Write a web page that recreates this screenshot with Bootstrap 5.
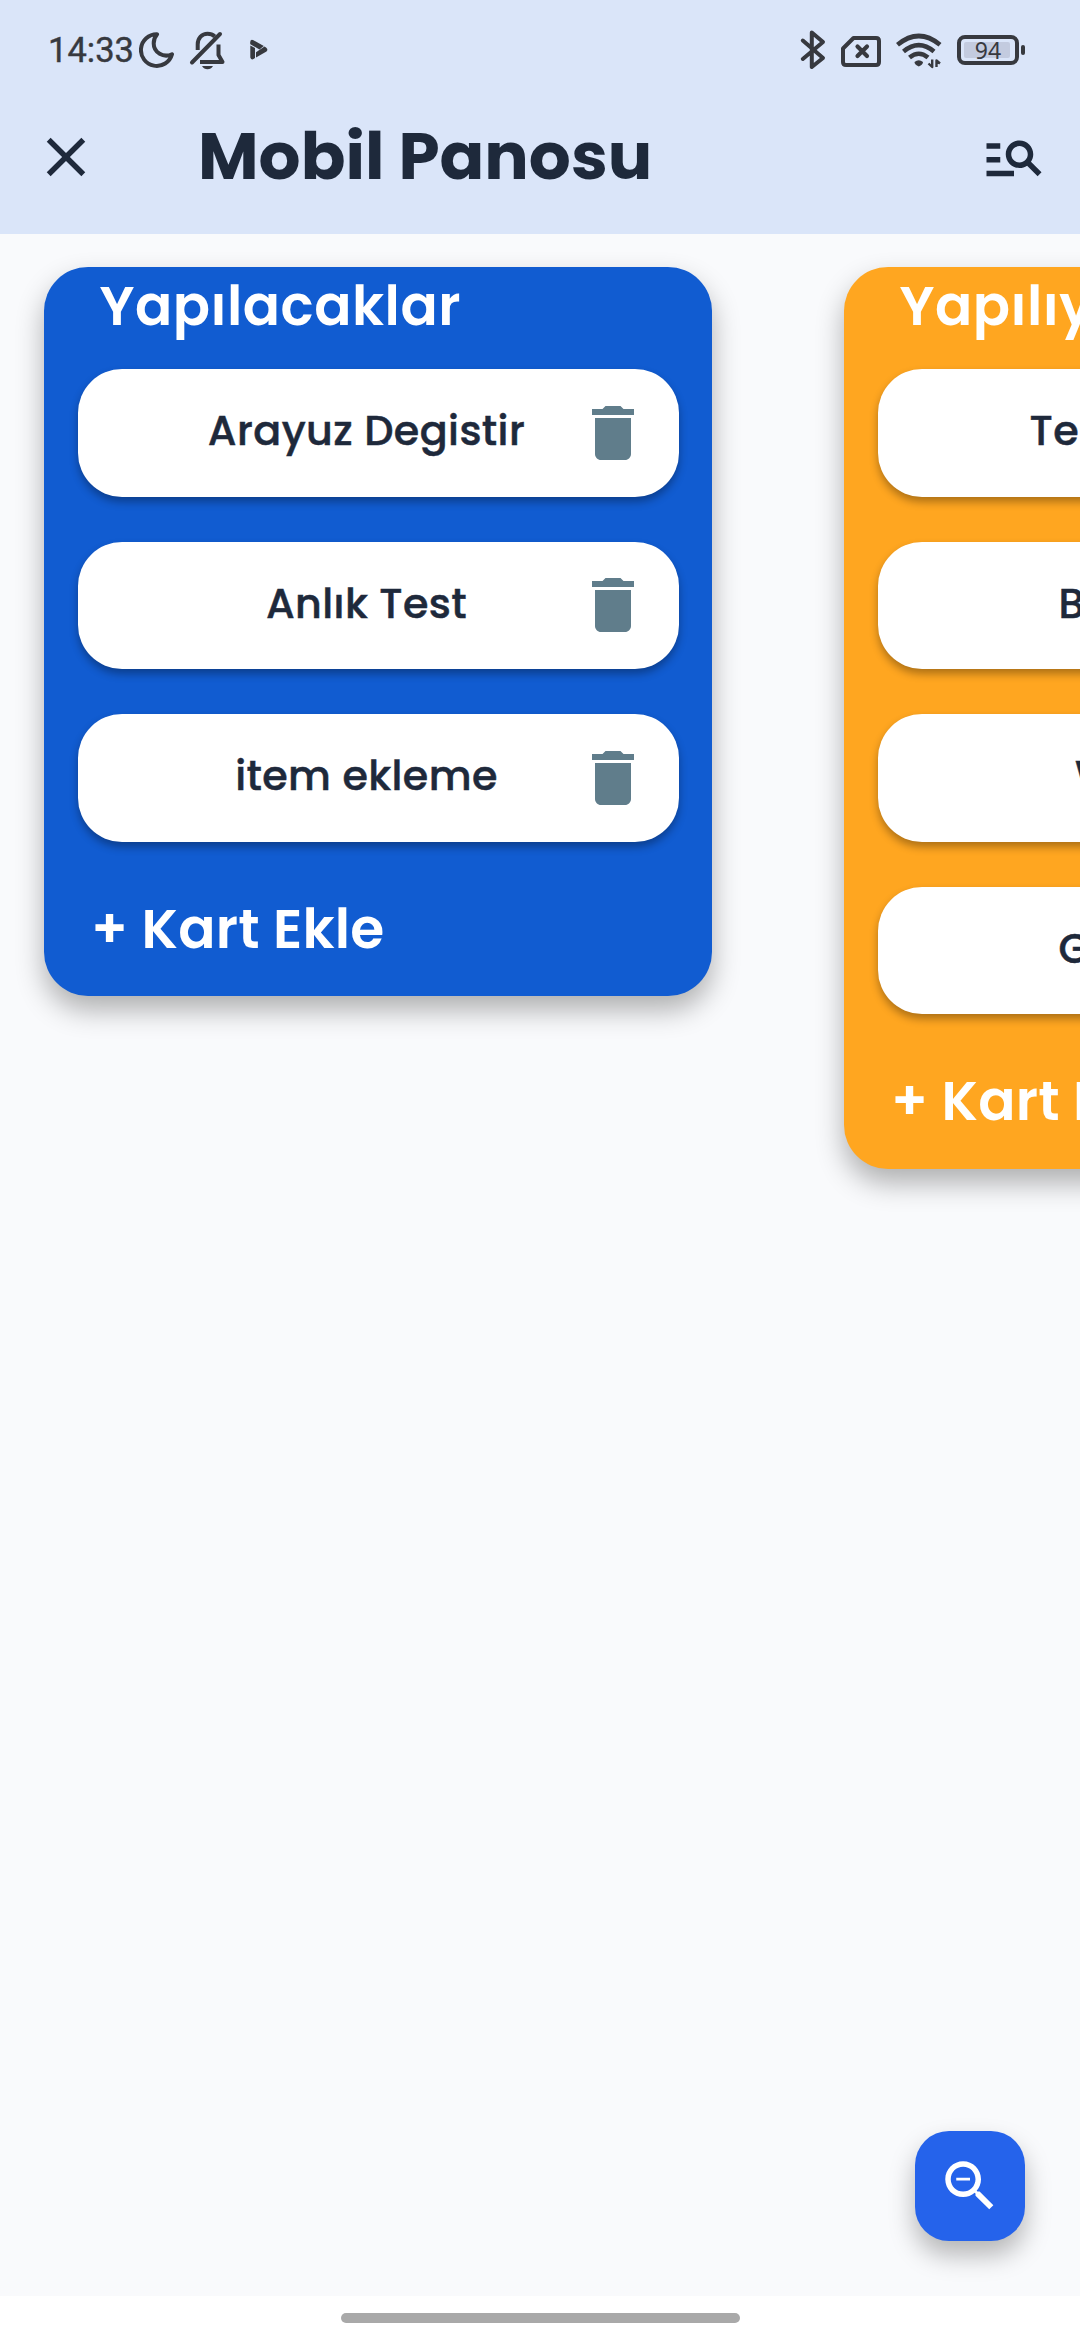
<!DOCTYPE html>
<html lang="tr">
<head>
<meta charset="utf-8">
<meta name="viewport" content="width=device-width, initial-scale=1">
<title>Mobil Panosu</title>
<link href="https://cdn.jsdelivr.net/npm/bootstrap@5.3.0/dist/css/bootstrap.min.css" rel="stylesheet">
<script src="https://cdn.jsdelivr.net/npm/bootstrap@5.3.0/dist/js/bootstrap.bundle.min.js" defer></script>
<style>
:root{--ink:#1e293b;--status:#37393f}
body{font-family:Poppins,Inter,"Open Sans",sans-serif;color:var(--ink);background:#f9fafc;width:1080px;height:2340px;overflow:hidden}
svg{display:block;flex:none}
.app-top{background:#dae5f9;height:234px;flex:none}
.status-bar{height:100px;padding:0 53px 0 48px;color:var(--status)}
.clock{font:400 34.5px/34px Roboto,sans-serif;width:91px;-webkit-text-stroke:.4px currentColor}
.title-bar{height:134px;padding:24px 33px 0}
.board-title{font-size:66px;font-weight:700;line-height:64px;margin-left:99px;white-space:nowrap}
.board{gap:132px;padding:32.5px 44px 0;flex:1 1 0}
.column-card{width:668px;flex:none;border-radius:44px;padding:0 33.5px;box-shadow:0 14px 28px rgba(0,0,0,.3);color:#fff}
.tone-blue{background:#115cd1}
.tone-orange{background:#ffa620}
.column-title{font-size:55px;font-weight:600;line-height:60px;letter-spacing:.5px;padding:9px 0 0 22px;height:102.5px;white-space:nowrap}
.task{height:127.6px;margin-bottom:45px;border-radius:44px;background:#fff;color:var(--ink);box-shadow:0 5px 9px rgba(0,0,0,.32);padding-right:30px}
.task-name{font-size:41.25px;font-weight:500;line-height:48px;letter-spacing:.41px;-webkit-text-stroke:.5px currentColor;white-space:nowrap;text-align:center;padding-left:79px;margin-top:-3.2px}
.task-name.from-te{text-align:left;padding-left:152px}
.task-name.from-b{text-align:left;padding-left:181px}
.task-name.from-w{text-align:left;padding-left:197.5px}
.add-card{font-size:55px;font-weight:600;line-height:60px;letter-spacing:.2px;padding:29px 0 0 13.5px;margin-top:-17px;height:126.5px;white-space:nowrap}
.fab{position:absolute;left:915px;top:2131px;width:110px;height:110px;border-radius:34px;background:#2563eb;box-shadow:0 14px 26px rgba(0,0,0,.28)}
.nav-zone{height:44px;background:#fff;padding-top:17px;flex:none}
.handle{width:399px;height:10px;border-radius:5px;background:#a9a9a9}
</style>
</head>
<body class="d-flex flex-column position-relative">
<svg width="0" height="0" class="position-absolute"><symbol id="bin" viewBox="0 0 24 24"><path fill="#607d8b" d="M6 19c0 1.1.9 2 2 2h8c1.1 0 2-.9 2-2V7H6v12zM19 4h-3.5l-1-1h-5l-1 1H5v2h14V4z"/></symbol></svg>
<header class="app-top">
  <div class="status-bar d-flex align-items-center">
    <span class="clock">14:33</span>
    <!-- do not disturb, muted bell, play -->
    <svg width="130" height="48" viewBox="139 25 130 48" fill="none" stroke="currentColor" stroke-width="4" stroke-linejoin="round" stroke-linecap="round">
      <path d="M157 33.3A15.8 15.8 0 1 0 172 53.200C163.500 57.300 153.700 51.500 153.700 42.500C153.700 38.300 155 35.500 157 33.300Z"/>
      <path d="M192 61.500L220 33"/>
      <path d="M197.700 49V43.500C197.700 37 202 32.800 207.500 32.800C210.500 32.800 213 33.800 214.800 35.500" stroke-linecap="butt"/>
      <path d="M200 61H222.500L218.500 54V43.500" stroke-linecap="butt"/>
      <path d="M202 65H213Q211 68.300 207.500 68.300T202 65Z" fill="currentColor" stroke="none"/>
      <path d="M250.300 44.500L255 47V57Q251.500 60 250.300 56.500Z" fill="currentColor" stroke="none"/>
      <path d="M250.300 43.300Q249.500 37.500 253.500 39.300L263.800 45L259.500 48.400Z" fill="currentColor" stroke="none"/>
      <path d="M264.500 45.500Q269 48.300 266.500 50.400L256 56.500V51.200Z" fill="currentColor" stroke="none"/>
    </svg>
    <!-- bluetooth, no SIM, wifi, battery -->
    <svg class="ms-auto" width="228" height="48" viewBox="799 25 228 48" fill="none" stroke="currentColor" stroke-width="4" stroke-linejoin="round" stroke-linecap="round">
      <path d="M802.800 39.500L823 57L811.800 66V31.500L823 41L802.800 58"/>
      <path d="M853.500 37H876Q879 37 879 40V61Q879 64 876 64H846Q843 64 843 61V47.500Z"/>
      <path d="M857.500 45.500L867 55M867 45.500L857.500 55" stroke-width="4.200"/>
      <g stroke-width="4.600" stroke-linecap="butt">
        <path d="M897.500 43.800Q918.800 26.200 940 43.800"/><path d="M903.500 50.500Q918.800 37.800 934 50.500"/><path d="M909.500 56.500Q918.800 49 928 56.500"/>
      </g>
      <path d="M914.500 61Q918.800 57.500 923 61Q923 63.500 918.800 65.500Q914.500 63.500 914.500 61Z" fill="currentColor" stroke="none"/>
      <path d="M932.200 58.500V66L928.500 62.500M936.500 66V59.500L940 62.500" stroke-width="2.400" stroke-linecap="butt"/>
      <rect x="964" y="41" width="46" height="16" rx="2" fill="#c3cbdf" stroke="none"/>
      <rect x="959" y="36" width="58" height="26" rx="6"/>
      <path d="M1023 46V52"/>
      <text x="988" y="57.900" text-anchor="middle" font-family="'Noto Sans',sans-serif" font-size="23" font-weight="400" fill="currentColor" stroke="none">94</text>
    </svg>
  </div>
  <div class="title-bar d-flex align-items-start">
    <svg width="66" height="66" viewBox="0 0 24 24"><path fill="#1e293b" d="M19 6.410L17.590 5 12 10.590 6.410 5 5 6.410 10.590 12 5 17.590 6.410 19 12 13.410 17.590 19 19 17.590 13.410 12z"/></svg>
    <h1 class="board-title mb-0">Mobil Panosu</h1>
    <svg class="ms-auto" width="66" height="66" viewBox="0 0 24 24"><path fill="#1e293b" d="M7 9H2V7h5v2zm0 3H2v2h5v-2zm13.590 7l-3.830-3.830c-.8.520-1.740.830-2.760.830-2.760 0-5-2.240-5-5s2.240-5 5-5 5 2.240 5 5c0 1.020-.310 1.960-.830 2.750L22 17.590 20.590 19zM17 11c0-1.650-1.350-3-3-3s-3 1.350-3 3 1.350 3 3 3 3-1.350 3-3zM2 19h10v-2H2v2z"/></svg>
  </div>
</header>
<main class="board d-flex align-items-start overflow-hidden">
  <section class="column-card tone-blue">
    <h2 class="column-title mb-0">Yapılacaklar</h2>
    <div class="task d-flex align-items-center"><div class="task-name flex-grow-1">Arayuz Degistir</div><svg width="72" height="72"><use href="#bin"/></svg></div>
    <div class="task d-flex align-items-center"><div class="task-name flex-grow-1">Anlık Test</div><svg width="72" height="72"><use href="#bin"/></svg></div>
    <div class="task d-flex align-items-center"><div class="task-name flex-grow-1">item ekleme</div><svg width="72" height="72"><use href="#bin"/></svg></div>
    <div class="add-card">+ Kart Ekle</div>
  </section>
  <section class="column-card tone-orange">
    <h2 class="column-title mb-0">Yapılıyor</h2>
    <div class="task d-flex align-items-center"><div class="task-name flex-grow-1 from-te">Te</div><svg width="72" height="72"><use href="#bin"/></svg></div>
    <div class="task d-flex align-items-center"><div class="task-name flex-grow-1 from-b">B</div><svg width="72" height="72"><use href="#bin"/></svg></div>
    <div class="task d-flex align-items-center"><div class="task-name flex-grow-1 from-w">W</div><svg width="72" height="72"><use href="#bin"/></svg></div>
    <div class="task d-flex align-items-center"><div class="task-name flex-grow-1 from-b">G</div><svg width="72" height="72"><use href="#bin"/></svg></div>
    <div class="add-card">+ Kart Ekle</div>
  </section>
</main>
<button class="fab btn border-0 p-0 d-flex align-items-center justify-content-center" type="button" aria-label="Ara">
  <svg width="66" height="66" viewBox="0 0 24 24"><path fill="#fff" d="M15.500 14h-.790l-.280-.270C15.410 12.590 16 11.110 16 9.500 16 5.910 13.090 3 9.500 3S3 5.910 3 9.500 5.910 16 9.500 16c1.610 0 3.090-.590 4.230-1.570l.270.280v.790l5 4.990L20.490 19l-4.990-5zm-6 0C7.010 14 5 11.990 5 9.500S7.010 5 9.500 5 14 7.010 14 9.500 11.990 14 9.500 14zM7 9h5v1H7z"/></svg>
</button>
<footer class="nav-zone d-flex justify-content-center align-items-start"><div class="handle"></div></footer>
</body>
</html>
